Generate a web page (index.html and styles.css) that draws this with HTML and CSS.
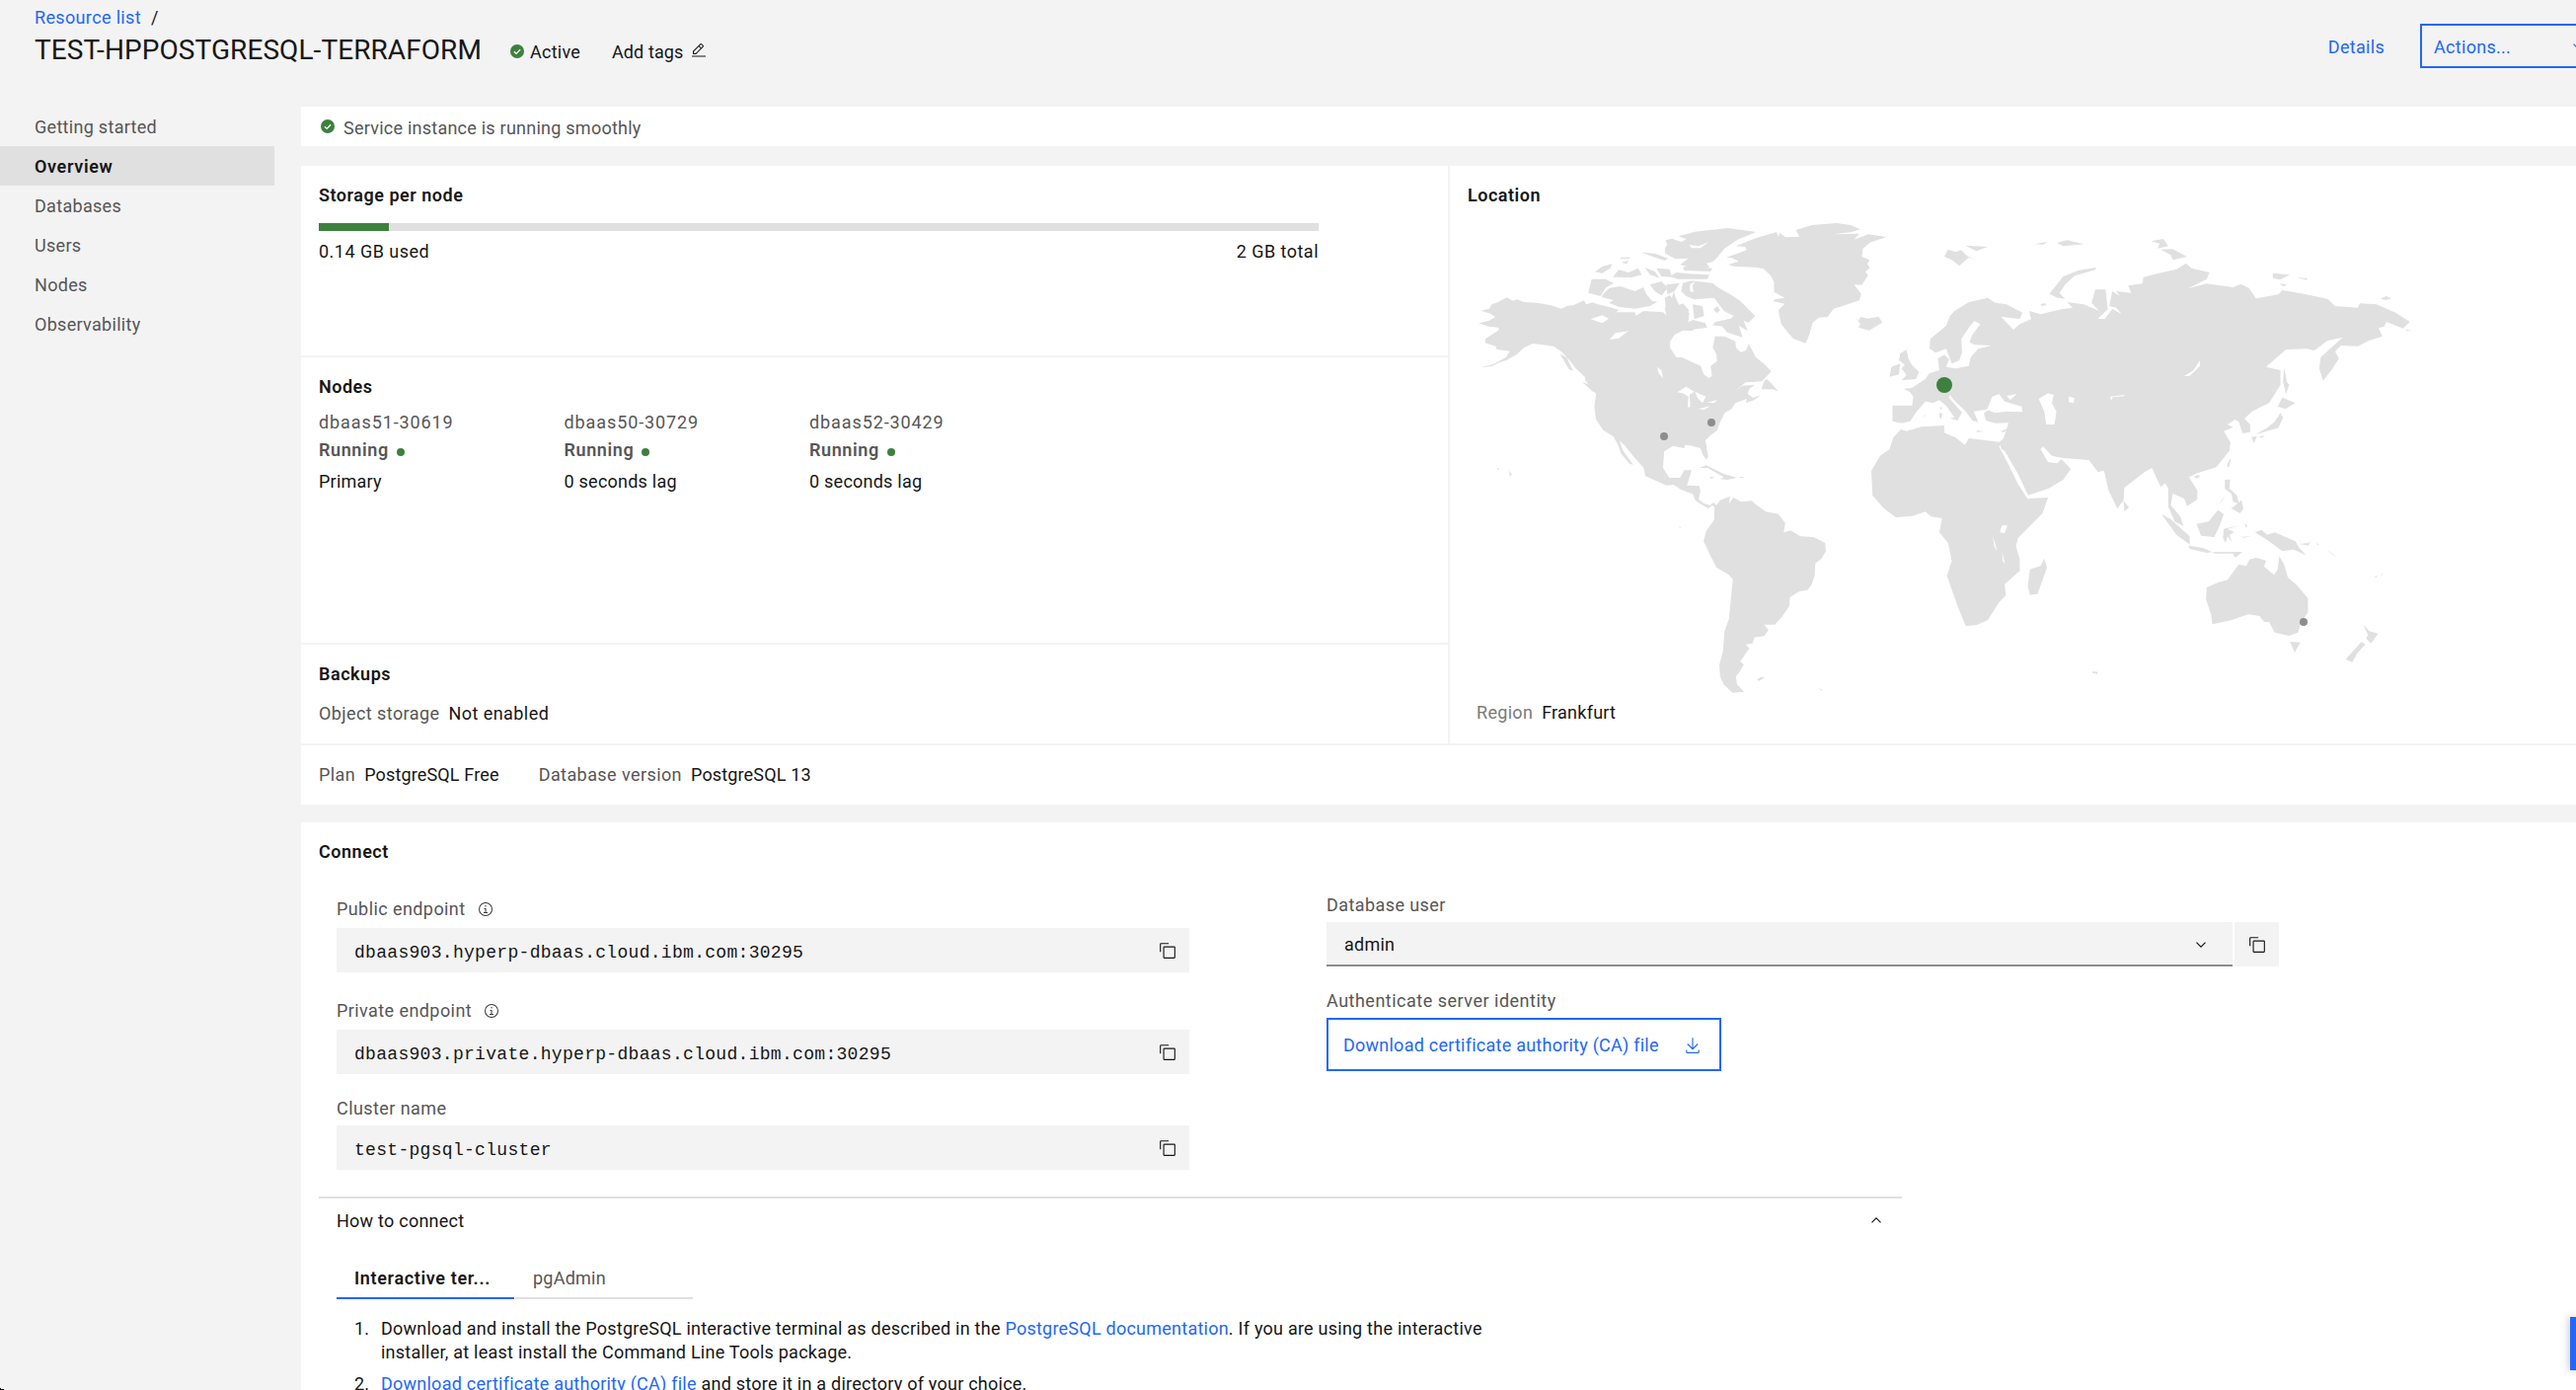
FILE: index.html
```html
<!DOCTYPE html>
<html lang="en">
<head>
<meta charset="utf-8">
<title>TEST-HPPOSTGRESQL-TERRAFORM</title>
<link rel="stylesheet" href="styles.css">
</head>
<body>
<svg class="defs" aria-hidden="true">
  <symbol id="check" viewBox="0 0 14 14"><circle cx="7" cy="7" r="7" fill="#3e8040"/><path d="M3.900 7.200l2.200 2.200 4-4.100" fill="none" stroke="#fff" stroke-width="1.300"/></symbol>
  <symbol id="copy" viewBox="0 0 32 32"><path d="M28 10v18H10V10h18m0-2H10a2 2 0 0 0-2 2v18a2 2 0 0 0 2 2h18a2 2 0 0 0 2-2V10a2 2 0 0 0-2-2z"/><path d="M4 18H2V4a2 2 0 0 1 2-2h14v2H4z"/></symbol>
  <symbol id="info" viewBox="0 0 32 32"><path d="M17 22v-8h-4v2h2v6h-3v2h8v-2zM16 8a1.500 1.500 0 1 0 1.500 1.500A1.500 1.500 0 0 0 16 8z"/><path d="M16 30a14 14 0 1 1 14-14 14 14 0 0 1-14 14zm0-26a12 12 0 1 0 12 12A12 12 0 0 0 16 4z"/></symbol>
  <symbol id="chev" viewBox="0 0 10 6"><path d="M.500 .600L5 5.100 9.500 .600" fill="none" stroke="currentColor" stroke-width="1.200"/></symbol>
  <symbol id="edit" viewBox="0 0 32 32"><path d="M2 27h28v2H2zM25.400 9a2 2 0 0 0 0-2.800l-3.600-3.600a2 2 0 0 0-2.800 0l-15 15V24h6.400zm-5-5L24 7.600l-3 3L17.400 7zM6 22v-3.600l10-10 3.600 3.600-10 10z"/></symbol>
  <symbol id="download" viewBox="0 0 32 32"><path d="M26 24v4H6v-4H4v4a2 2 0 0 0 2 2h20a2 2 0 0 0 2-2v-4zM26 14l-1.410-1.410L17 20.170V2h-2v18.170l-7.590-7.580L6 14l10 10 10-10z"/></symbol>
</svg>
<div class="page">
  <header class="header">
    <div class="header-left">
      <nav class="breadcrumb"><a class="link">Resource list</a><span>/</span></nav>
      <div class="title-row">
        <h1 class="title">TEST-HPPOSTGRESQL-TERRAFORM</h1>
        <div class="status"><svg class="i14"><use href="#check"/></svg><span>Active</span></div>
        <div class="tags"><span>Add tags</span><svg class="i16"><use href="#edit"/></svg></div>
      </div>
    </div>
    <div class="header-right">
      <a class="link">Details</a>
      <button class="actions"><span>Actions...</span><svg class="chev"><use href="#chev"/></svg></button>
    </div>
  </header>
  <div class="body">
    <nav class="sidebar">
      <a class="nav">Getting started</a>
      <a class="nav nav-on">Overview</a>
      <a class="nav">Databases</a>
      <a class="nav">Users</a>
      <a class="nav">Nodes</a>
      <a class="nav">Observability</a>
    </nav>
    <main class="main">
      <div class="banner"><svg class="i14"><use href="#check"/></svg><span>Service instance is running smoothly</span></div>
      <section class="panel">
        <div class="overview">
          <div class="left">
            <div class="cell storage">
              <h2 class="h">Storage per node</h2>
              <div class="bar"><div class="bar-fill" style="width:7%"></div></div>
              <div class="bar-labels"><span>0.14 GB used</span><span>2 GB total</span></div>
            </div>
            <div class="cell nodes">
              <h2 class="h">Nodes</h2>
              <div class="node-grid">
                <div class="node"><div class="node-id">dbaas51-30619</div><div class="running"><span>Running</span><i class="dot"></i></div><div>Primary</div></div>
                <div class="node"><div class="node-id">dbaas50-30729</div><div class="running"><span>Running</span><i class="dot"></i></div><div>0 seconds lag</div></div>
                <div class="node"><div class="node-id">dbaas52-30429</div><div class="running"><span>Running</span><i class="dot"></i></div><div>0 seconds lag</div></div>
              </div>
            </div>
            <div class="cell backups">
              <h2 class="h">Backups</h2>
              <div class="pair"><span class="muted">Object storage</span><span class="loose">Not enabled</span></div>
            </div>
          </div>
          <div class="location">
            <h2 class="h">Location</h2>
            <svg class="map" viewBox="1487 210 980 500">
              <g transform="translate(1450 200) scale(.35714 .33333)" class="land">
                <path d="M135 382l30-8 17-10-12-10-28-10 23-6 7-13 18-7 25-14 17 10 13-4 17 8 38 2 40 8 30 10 15-8 20-3 28-14 8 12 17-6 15 6 30 7 30 10-10 7 55 0 3 10 22-14 55 4 10 10-5-22 20-30 5-22 7 22 8 20 12-5 16 20-6 27-22-2 12 20 28-15 35 10 5 13-35 4-7 6-28 0-22 12-13 20 0 20 17 28 18 2 30 15 22 10 8 25 15 12 9-7-4-30 18-15-2-22-10-18 6-35 28 0 30 15 2 20 13 13 15-5 8-20 20 40 27 24 17 20-12 13-15 17-45 3-35 30 25-20 35-3-15 13-5 15 15 12 22-8-17 14-25 10 3-13-33 13-10 17-20 13-15 32-7 22-18 13-15 17 8 48-5 10-10-15-7-20-23-7-20-3-3 10-32-7-25 17-3 50 18 30 30 0 12-23 21 0-13 46 35 2 3 15-5 25 15 13 17 5 10-8 11 12-4 6-10-10-12 10-36-23-7-20-35-15-20-14-20 2-60-28-5-25-25-30-30-40-13-13 8 28 30 45-10-3-25-32-5-18-15-32-30-20-20-32-5-38 5-40-30-40-2-12-28-28-10-15-25-30-25-20-60-8-25 13-20 20-30 18-40 14 40-24 10-18-37-5-3-10-30-10 2-13 38-27-3-7-27-3z"/>
                <path d="M804 942l16-22 28-12-3 22 13-18 22 13 30-3 12 12 28 21 35 7 20 28-5 28 20-6 28 18 37 2 33 18 2 25-12 22-18 15-2 38-8 25-12 18-23 4-27 18-2 27-21 33-20 23-30 0 12 17-12 18-28 4-5 18-19 3 10 12-13 20-13 20 10 10-12 22-10 13 3 25 20 22-33 3-25-25-10-25-2-35 10-40 4-60 13-40 11-120-13-15-33-20-17-35-20-45 7-30 23-35z"/>
                <path d="M838 182l57-22-4-10-26-2 60-26 55-17 5 14 5-12 15 14 40-2-10-20 45-15 70-6 40 6 28 13-28 9-50 6 75-2-15 18 40-16 52 8-47 17-20 18-3 25 22 10-7 12 8 12-13 12 8 10-18 30-22-1 20 28-5 20-40 14-33 11-17 25-25 2-18 16-7 30-12 32-35-13-18-22-17-25-8-40 18-20-32-7 5-7 27-4-30-18 0-30-10-20-20-20-25-5-60-3-15-5 30-10-20-10z"/>
                <path d="M1203 365l10 10 5-12 22 5 30-6 10 18-37 24-31-9 6-10zM937 583l8-25 7-6 13 13 20 25-15-7zM760 822l20-8 50 26 38 12-28 6-20-2 10-6-45-28zM876 849h10v4h-10zM790 848l15 3-12 3zM222 832l8 10-7 5zM218 828h4v4zM187 823h5v4h-5zM703 998l5 4-1 5zM924 1465l12-8 10 2-15 10zM1097 1492l10 2 6 7zM428 560l30 13 11 20-10-3zM365 475l20 12 18 40-12-5z"/>
              </g>
              <g transform="translate(1490 220) scale(.33333)" class="land">
                <path d="M590 95l8-12-6-13 20-5 28 10 16-8-24-9 50-14 100-11 86 12-56 23-40 27-25 30-10 10-20 5 10 12-45 3-45-10 25-20-40 2-30-17z"/>
                <path d="M645 152l20-4 70 7-5 10-80-3zM605 180l20-12 35 4 65 3-5 13h-90zM358 230l10-42 42 0 25 12-25 15-15 25zM400 237l22-22 33-5 45 15 25-12 10 22 17 20 16 2-23 13-45 8-50-6-30-12 15-8-35-8zM432 182l18-22 30 8 30-13 10 20-30 8zM378 166l22-16 30-8-5 13-25 15zM457 122h30l-5 4h-28zM457 138l23-6-5 10zM520 107l40 3 40 15-10 7-30-10zM530 153l30 12 15 20-30-10zM565 155l40 3 7 24-32-2zM545 205l35-10 20 20-20 23-20-13zM595 205l40-5-15 25-22 10zM590 245l15-8 45 45 15 10-5 40-60-10zM640 225l5-25 25-7 65 7 20 15 35 20 30 20 45 45-20 20-15-5 12 30-27-15 12 35-47-15-15-18-30-4 10-10 45-10 10-8-30-15-30-40-60 5-25-10zM675 265l30 5 5 30-30 10zM665 342l15-22 40 15zM738 280l12-10 8 12-10 10zM30 457l30-8 30-10-25 14z"/>
                <path class="water" d="M365 310l35-12 20 10-20 14zM422 372l18-20 40-6-30 22zM567 455l13 10 5 25-13-15zM628 532l27-17 25 15-15 10 3 35-8 3 2-33-17-10zM682 530l33 15-10 20-15-15zM692 583l38-10-20 12zM720 563l30-8-10 10zM665 84l28 4 30-12-24 18-28 0zM667 225l0-20 15-10-8 15 4 18z"/>
              </g>
              <g transform="translate(1880 200) scale(.38265 .33333)" class="land">
                <path d="M98 632l52 0 3-27-10-15-15-8 22-4 20-15 15-11 10-17 27-10-4-35 17-12 13 14-8 23 25 5 35-8 5-27 20-25 35-10-45-2-13-8 6-20 22-35-15-10-15 20-20 35 2 40-7 25-20 10-15-45-28 12-16-12 2-30 42-40 10-30 12-15 38-27 50-13 20 15 30 5 42 25-7 20-50-8 15 18 18 22 17-17 30-15-5-25 30 10 55-15 30-5-15-17 45 7 40 20-20-25 10-40 27 0 6 60-26 28 18 2 20-32 25 17-15-20-18-5 8-45 20 15-10-15 40 5-8-22 38-6 2-19 30-10 58-15 25-18 15 15 47 13-7 20-50 29 50-15 70 11 20-10 22 12 18 32 60-12 10-13 50 10 70 16 20 22 60 5 5-13 45 3 50 25 38 28-18 20-45-20-5 14-15 5 10 25-35 13-30 17-45-2-15 18 10 22-20 35-22 32-10-37 4-35 58-60-40 10-35 30-20-5-55 2-53 53 38 10 0 45-30 55-45 25-20 22 15 18 0 23-20 4-10-35-10-7-20 15 15 8-25 12 18 35-3 25-35 50-50 18-22 12 22 40 0 28-27 20-8-23-30-15-5 35 25 35 8 28-23-13-17-45 0-55-8-17-12 12-23-58-20 13-53 47-2 38-17 25-23-55-12-60-16 5-24-37-68-6-30-7-23-28-7 8 20 40 25 3 10-13 25 30-20 33-40 27-53 20-27-65-35-70-8-5-7-20 12-12 13-48-35 1-25-8-5-22 15-13-42 7 12 33-15-5-20-30-28-30-12-18-3 8 35 45-12 25-20-7 12-3-22-35-18-17-17 9-20-5-25 33-15 27-23 6-24-6z"/>
                <path d="M120 705l15 5 40-13 60-4 0 22 30 15 25 22 10-20 92 13-12 12 20 43 30 70 25 45 55-3-15 48-65 75-5 25 10 40 0 35-40 40 3 35-18 20-30 55-30 15-28 2-12-32-18-55-20-65 13-45-10-55-23-32 7-43-29-5-15-15-35 13-43 4-32-27-30-40-3-75 23-45 25-20 10-35z"/>
                <path d="M118 475l17-13 5 28 10 20 18 20-8 22-38 4 13-16-13-20 8-12-15-13zM90 545l5-30 23-10-3 33zM235 180l10-22 20 8 15-6 15 18 30 14-25-10-25 26-20-18zM290 146l60 4-30 13zM473 142l35-7-10 8zM533 138l27-8 45 12-55 6zM513 293l37-53 40-18 47-9-2 7-55 18-25 27-15 25 15 18-20-3zM783 133l32-7 13 22-28 7 5-15zM808 158l32-1 38 23-38 10-5-15zM1105 230l45 5-25 15-20-5zM1168 242l30 5-5 4zM1122 262l20 2-8 7zM1390 308l15-8 14 7-15 5zM490 325l12-4 3 6-12 3zM1455 401l20 3-15 1zM500 1097l7 28-25 80-20 3-6-28 6-50 28-10zM710 922l14 20-12 13zM810 962l25 16 50 52 0 25-35-30zM882 1058l38 7 25 13-15 2-45-12zM945 1078l80-1-20 18-5-13-50 0zM903 992l32-7 25-35 15 12-10 33-15 37-35-4zM975 1007l40-10-30 11 18 9-13 8 7 23-12-18-5 20-7-15zM1030 990l8 8-4 6zM1020 1031l28-1-20 4zM978 858l14-1-2 28 20 20 5 25-15-5-5-25-17-15zM995 945l27-25 5 25-9 15zM962 933l15-25-5 12zM983 815l8-20 3 2-6 24zM896 848l12-5 4 5-9 6zM1058 1018l17-8 15 15 20-7 55 27 10 20 18 22-33-17-30 5-35-30zM1175 1053l25-3 5-10-5 18zM1208 1030l8 8zM1218 1048l10 8-4 0zM1245 1068l30 25-12-8zM1135 515l7 45 6 10-8 28-8-38zM1130 608l35 17-27 18-20-8zM1125 655l7 13-12 32-35 12-25 8 30-20 20-18zM1048 728l15-2-8 20zM1068 728l16-6-8 9zM930 1185l30-15 25-8 30-47 20 5 8-20 17-5 27 8-5 19 26 25 10-17 4-40 13 25 10 40 25 25 28 38 0 42-21 40-5 22-24 10-38-10-15-32-13 0-12-18-30-5-45 18-50 12-3-27-14-50zM1150 1350l28 2-15 30zM1345 1298l15 20 24 7-19 30-13-15 5-10zM1340 1350l10 8-20 25-15 30-17-10zM628 1440l14 2-2 6-12-3zM1373 1152l10-2-4 5zM1390 1147l6-4-2 5zM320 708l22 3-20 2zM385 710l18-8-10 12zM222 655l8 2-3 15-5-2zM223 638l5-2-1 12zM180 662l6 0-3 4z"/>
                <path class="water" d="M348 645l14-40 18-7 15 22 45 15 2 17-42-2-30 5zM485 612l25-17 15 5-5 25 12 25-5 40-22 0-5-40zM565 605l15 5-3 15-12-3zM675 605l37-5-1 4-30 3-5 12zM870 543l25-18 17-30 0 17-27 30zM382 1018l6-21 14 0-7 23zM364 1030l11 45-8-15zM388 1075l8 40-6-10zM400 603l27-6-17 18z"/>
              </g>
              <circle class="pin" cx="1686" cy="442" r="4"/>
              <circle class="pin" cx="1734" cy="428" r="4"/>
              <circle class="pin" cx="2334" cy="630" r="4"/>
              <circle class="pin-on" cx="1970" cy="390" r="8"/>
            </svg>
            <div class="pair region"><span class="light">Region</span><span>Frankfurt</span></div>
          </div>
        </div>
        <div class="plan">
          <div class="pair"><span class="muted">Plan</span><span>PostgreSQL Free</span></div>
          <div class="pair"><span class="muted">Database version</span><span>PostgreSQL 13</span></div>
        </div>
      </section>
      <section class="panel connect">
        <h2 class="h">Connect</h2>
        <div class="forms">
          <div class="col-a">
            <div class="label"><span>Public endpoint</span><svg class="i16"><use href="#info"/></svg></div>
            <div class="field"><code>dbaas903.hyperp-dbaas.cloud.ibm.com:30295</code><svg class="i18"><use href="#copy"/></svg></div>
            <div class="label label-2"><span>Private endpoint</span><svg class="i16"><use href="#info"/></svg></div>
            <div class="field"><code>dbaas903.private.hyperp-dbaas.cloud.ibm.com:30295</code><svg class="i18"><use href="#copy"/></svg></div>
            <div class="label label-3"><span>Cluster name</span></div>
            <div class="field field-3"><code>test-pgsql-cluster</code><svg class="i18"><use href="#copy"/></svg></div>
          </div>
          <div class="col-b">
            <div class="label">Database user</div>
            <div class="user-row"><div class="select"><span>admin</span><svg class="chev"><use href="#chev"/></svg></div><div class="copy-btn"><svg class="i18"><use href="#copy"/></svg></div></div>
            <div class="label label-auth">Authenticate server identity</div>
            <button class="download"><span>Download certificate authority (CA) file</span><svg class="i18"><use href="#download"/></svg></button>
          </div>
        </div>
        <div class="howto">
          <div class="howto-head"><span>How to connect</span><svg class="chev up"><use href="#chev"/></svg></div>
          <div class="tabs"><div class="tab tab-on">Interactive ter...</div><div class="tab">pgAdmin</div></div>
          <ol class="steps">
            <li><span class="num">1.</span><div>Download and install the PostgreSQL interactive terminal as described in the <a class="link">PostgreSQL documentation</a>. If you are using the interactive<br>installer, at least install the Command Line Tools package.</div></li>
            <li><span class="num">2.</span><div><a class="link">Download certificate authority (CA) file</a> and store it in a directory of your choice.</div></li>
          </ol>
        </div>
      </section>
    </main>
  </div>
</div>
<div class="feedback"></div>
<div class="corner"></div>
</body>
</html>
```
FILE: styles.css
```css
* { box-sizing: border-box; }
body { margin: 0; width: 2610px; height: 1408px; overflow: hidden; position: relative; background: #f3f3f3; color: #161616; font: 18px/24px Roboto, "Liberation Sans", sans-serif; letter-spacing: .24px; }
h1, h2, ol { margin: 0; padding: 0; font-weight: 400; }
svg { flex: none; display: block; fill: currentColor; }
button { font: inherit; letter-spacing: inherit; background: none; border: 2px solid #2467f6; color: #2467f6; padding: 0; display: flex; text-align: left; }
.defs { display: none; }
.link { color: #2467f6; }
.muted, .label { color: #565656; letter-spacing: .42px; }
.loose { letter-spacing: .44px; }
.page { width: 2642px; }
.i14 { width: 14px; height: 14px; }
.i16 { width: 16px; height: 16px; }
.i18 { width: 18px; height: 18px; }
.chev { width: 10px; height: 6px; }

.header { display: flex; height: 108px; }
.header-left { padding: 6px 0 0 35px; }
.breadcrumb { display: flex; gap: 10px; letter-spacing: .35px; }
.title-row { display: flex; }
.title { font-size: 28px; line-height: 42px; width: 482px; white-space: nowrap; letter-spacing: .08px; }
.status, .tags { display: flex; align-items: center; height: 46px; }
.status { gap: 6px; width: 103px; }
.status svg { margin-top: -2px; }
.tags { gap: 8px; letter-spacing: .1px; }
.tags svg { margin-top: -4px; }
.header-right { margin-left: auto; display: flex; gap: 36px; padding-top: 24px; line-height: 48px; letter-spacing: .3px; }
.actions { width: 190px; height: 45px; line-height: 44px; justify-content: space-between; padding: 0 23px 0 12px; }
.actions svg { margin-top: 18px; }

.body { display: flex; gap: 27px; }
.sidebar { width: 278px; flex: none; }
.nav { display: block; height: 40px; line-height: 42px; padding-left: 35px; color: #565656; letter-spacing: .3px; }
.nav-on { background: #e0e0e0; color: #161616; font-weight: 600; letter-spacing: .65px; }

.main { flex: 1; min-width: 0; }
.banner { height: 40px; background: #fff; display: flex; align-items: center; gap: 9px; padding: 3px 0 0 20px; color: #565656; margin-bottom: 20px; }
.banner svg { margin-top: -3px; }
.panel { background: #fff; margin-bottom: 18px; }
.overview { display: flex; border-bottom: 2px solid #f3f3f3; }
.left { width: 1162px; }
.cell { padding: 18px 18px 0; border-bottom: 2px solid #f3f3f3; }
.cell:last-child { border-bottom: 0; }
.h { font-size: 18px; font-weight: 600; letter-spacing: .52px; }
.storage { height: 194px; }
.nodes { height: 291px; }
.backups { height: 100px; }
.bar { width: 1013px; height: 8px; background: #e0e0e0; margin: 16px 0 9px; }
.bar-fill { height: 8px; background: #3e8040; }
.bar-labels { width: 1013px; display: flex; justify-content: space-between; letter-spacing: .48px; }
.node-grid { display: flex; margin-top: 12px; }
.node { width: 248.500px; }
.node-id { color: #565656; letter-spacing: .9px; }
.running { display: flex; gap: 8px; font-weight: 600; color: #565656; margin: 4px 0 8px; letter-spacing: .6px; }
.dot { width: 8px; height: 8px; border-radius: 50%; background: #3e8040; margin-top: 10px; }
.pair { display: flex; gap: 9px; }
.backups .pair { margin-top: 16px; }
.location { flex: 1; border-left: 2px solid #f3f3f3; padding: 18px 0 0 18px; }
.map { width: 980px; height: 500px; }
.land { fill: #e0e0e0; }
.water { fill: #fff; }
.pin { fill: #8d8d8d; }
.pin-on { fill: #3e8040; }
.region { padding-left: 9px; }
.light { color: #7a7a7a; letter-spacing: .3px; }
.plan { display: flex; height: 60px; align-items: center; gap: 40px; padding-left: 18px; letter-spacing: .15px; }

.connect { height: 600px; padding: 18px 18px 0; }
.forms { display: flex; padding-left: 18px; gap: 139px; }
.col-a { width: 864px; padding-top: 34px; }
.col-b { padding-top: 30px; }
.label { display: flex; gap: 12px; }
.label svg { margin-top: 4px; color: #393939; }
.field { height: 45px; margin-top: 7px; background: #f3f3f3; display: flex; justify-content: space-between; padding: 13px 13px 0 18px; }
.field svg { margin-top: 1px; }
.field-3 { margin-top: 5px; }
code { font: 18px/24px "Liberation Mono", monospace; letter-spacing: .3px; }
.label-2 { margin-top: 27px; }
.label-3 { margin-top: 23px; }
.user-row { display: flex; gap: 2px; margin-top: 5px; }
.select { width: 918px; height: 45px; background: #f3f3f3; border-bottom: 2px solid #8d8d8d; display: flex; justify-content: space-between; align-items: center; padding: 2px 27px 0 18px; }
.copy-btn { width: 45px; height: 45px; background: #f3f3f3; padding: 14px; }
.label-auth { margin-top: 23px; letter-spacing: .5px; }
.download { width: 400px; height: 54px; margin-top: 5px; align-items: center; justify-content: space-between; padding: 2px 18px 0 15px; }

.howto { width: 1604px; margin-top: 27px; border-top: 2px solid #e0e0e0; padding-left: 18px; }
.howto-head { display: flex; justify-content: space-between; padding: 11px 21px 0 0; height: 60px; }
.up { transform: rotate(180deg); margin-top: 8px; }
.tabs { display: flex; gap: 1px; }
.tab { width: 180px; height: 42px; line-height: 42px; padding-left: 18px; border-bottom: 2px solid #e0e0e0; color: #565656; }
.tab-on { border-color: #2467f6; color: #161616; font-weight: 600; letter-spacing: .65px; }
.steps { list-style: none; padding: 18px 0 0 18px; white-space: nowrap; }
.steps li { display: flex; margin-bottom: 8px; }
.num { width: 27px; }

.feedback { position: absolute; right: 0; top: 1334px; width: 6px; height: 54px; background: #2467f6; box-shadow: 0 0 8px rgba(0,0,0,.3); }
.corner { position: absolute; left: 0; bottom: 0; width: 8px; height: 3px; background: radial-gradient(ellipse 8px 3px at 100% 0, transparent 96%, #111 100%); }
```
